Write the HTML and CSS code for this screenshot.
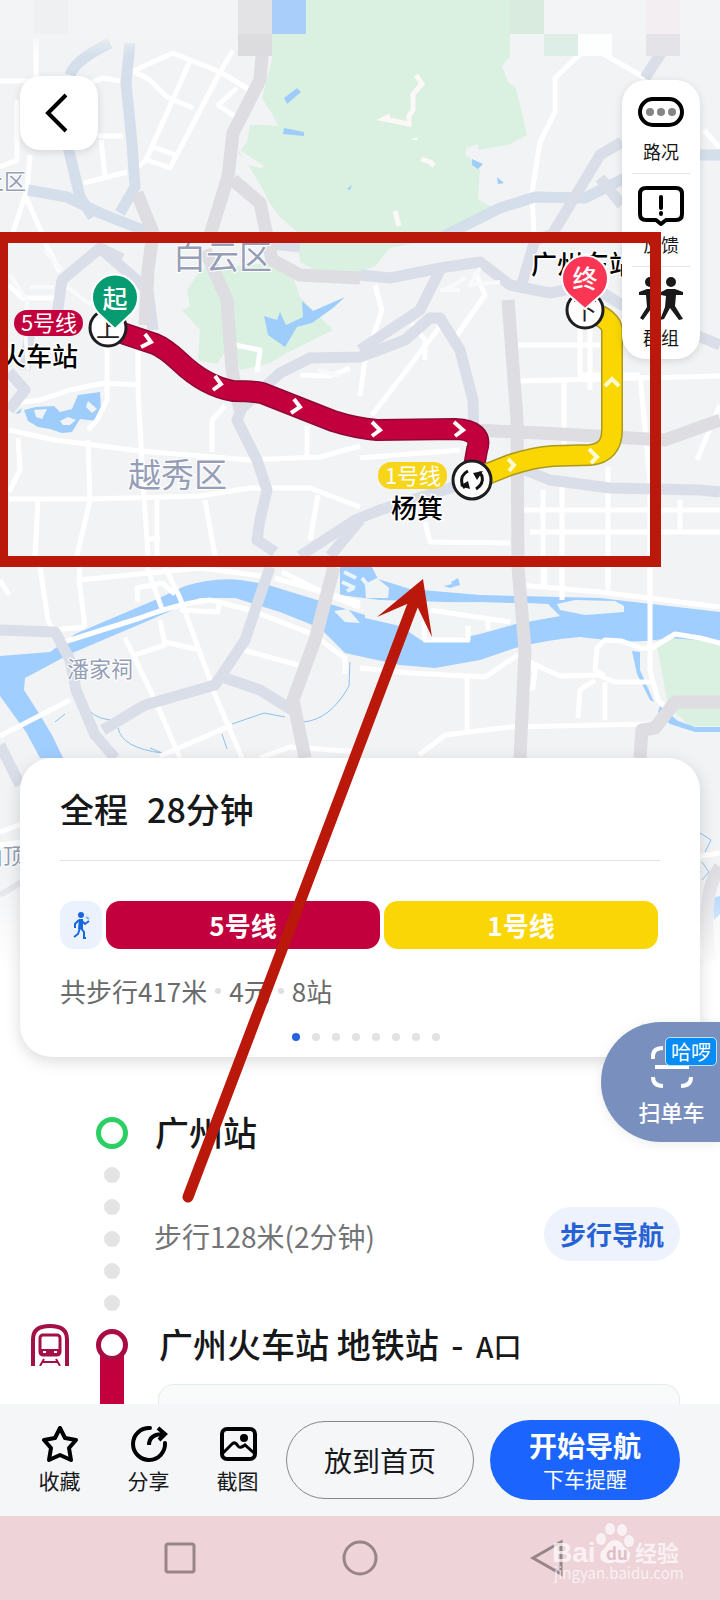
FILE: index.html
```html
<!DOCTYPE html>
<html lang="zh-CN">
<head>
<meta charset="utf-8">
<meta name="viewport" content="width=device-width, initial-scale=1">
<title>公交路线</title>
<link rel="stylesheet" href="styles.css">
</head>
<body>
<div class="screen">
  <svg class="map" viewBox="0 0 720 1000" role="img" aria-label="地图">
    <defs>
      <linearGradient id="fade" x1="0" y1="0" x2="0" y2="1"><stop offset="0" stop-color="#fff" stop-opacity="0"/><stop offset="1" stop-color="#fff"/></linearGradient>
      <linearGradient id="top" x1="0" y1="0" x2="0" y2="1"><stop offset="0.5" stop-color="#f3f4f6"/><stop offset="1" stop-color="#f3f4f6" stop-opacity="0"/></linearGradient>
    </defs>
    <rect width="720" height="1000" fill="#f2f3f5"/>
    <!-- parks -->
    <g fill="#daf1e1">
      <path d="M272 0H510V57L502 66L508 82L516 88L527 135L508 145L465 152L480 170L478 200L495 208L478 222L440 238L390 248L375 266L360 272L325 276L300 262L297 232L278 215L268 200L262 188L250 168L238 153L247 142L250 125L278 125L270 112L262 98L272 60Z"/>
      <path d="M197 275L187 290L190 307L182 310L200 330L198 360L217 364L233 340L240 370L270 363L287 353L333 330L300 297L290 267L267 263L233 267L207 265Z"/>
      <path d="M656 640L690 634L720 646V726H690L668 706Z"/>
    </g>
    <path d="M466 148L478 144L480 160L466 156Z M258 104L270 110L278 126L256 124Z M240 150L264 166L262 168L242 164Z" fill="#f2f3f4"/>
    <path d="M416 75L422 84L413 94V110L409 116V124L384 119L390 116M415 138V140M421 159L430 162L434 166M395 211L399 226" fill="none" stroke="#fbf8f7" stroke-width="5"/>
    <!-- lakes -->
    <g fill="#9fcdfb">
      <path d="M284 98L297 88L301 92L287 104ZM284 128L304 132V136L283 134ZM472 159L483 164L478 169L472 165ZM347 189L352 185L350 190ZM497 177L504 183L498 184Z"/>
      <path d="M264 316L277 320L280 312L286 325L303 317L302 301L313 311L345 297L333 308L312 323L297 327L285 347L268 335Z"/>
      <path d="M24 410L36 407L54 406L60 412L72 409L78 395L100 392L101 410L96 421L80 419L72 432L62 433L50 429L38 427L28 421ZM15 414L22 408L20 413Z"/>
    </g>
    <path d="M34 410L47 409L42 419L36 417M60 421L68 417L76 420L70 425L63 425M88 401L97 409L92 413L86 407M79 402L83 406" fill="#f2f3f6"/>
    <!-- river -->
    <g fill="#a0cefe">
      <path d="M0 656L50 652L75 634L155 600L185 586Q215 577 240 580L265 584L330 604L400 626L440 642Q475 637 515 624L560 616L548 604L525 603H480L380 600L340 595L340 567H372L378 579L410 589L480 595L600 598L720 612V642L670 638Q640 643 615 641L580 637Q545 640 515 648L480 660L435 668L400 665L345 653L320 628L280 612L235 598L200 598L150 620L70 654L25 678L24 690L40 715L52 735L63 758H40L26 732L0 696Z"/>
      <path d="M632 651L640 652V670L654 702L650 700L637 674ZM660 706L678 721L695 727H720V732H695L670 724L658 712Z"/>
      <path d="M712 898L720 896V914L714 920ZM700 958L704 960V972L700 974Z"/>
    </g>
    <path d="M557 604L575 600L615 601L624 606V612L585 615L560 610ZM334 611L348 609L360 623L345 622ZM365 584L377 578L389 588L388 598H366ZM365 604L480 602L540 604L558 616L515 624L480 632L440 642H424L400 626L365 618Z" fill="#f1f4f4"/>
    <path d="M344 572L356 578M342 582L355 588M347 591L354 588M362 578L370 588" stroke="#eaf5fb" stroke-width="4"/>
    <path d="M451 582L458 578L460 585L450 588L444 586L452 584Z" fill="#a0cefe"/>
    <path d="M84 704Q92 718 110 720M118 728Q122 748 162 753M232 724L264 713L285 717M303 722Q330 720 349 686L350 662M222 734L227 749M150 748L162 753M65 714L55 722M700 833L711 840L705 852M702 862L709 872L702 880" fill="none" stroke="#8cc1ee" stroke-width="1"/>
    <!-- local streets -->
    <g fill="none" stroke="#fff" stroke-width="5" stroke-linejoin="round">
      <path d="M0 81H36V38M17 100V160L0 167M92 82L103 78L120 81M98 136H123M101 140L105 175M84 183L127 172M30 155L27 190L12 235M25 195L45 240"/>
      <path d="M133 71L173 53L220 72L250 90M233 50L219 74L170 168L147 160L138 166M190 61L146 160M133 71L150 80L167 97L193 108M151 146L175 155M237 88L218 105L237 118"/>
      <path d="M534 235L532 192L540 142L555 112V78L580 54L602 53L645 78M704 130L720 148"/>
      <path d="M45 243L60 272M9 285L22 298H55M15 403L40 400L70 390L105 383L138 385M107 345V400L97 420L88 430M138 345V390L143 480L148 556M9 430L55 440L140 451L250 460L320 457L345 450L360 446M88 440L90 500L77 556M9 499H90L200 496L250 488L310 488L360 507M38 500L35 556M18 438L20 470L9 492M205 500L215 556M157 500V556M147 539H160M212 452V420L225 406M235 345L260 350L257 372M307 426V457M318 495L310 540M300 375L330 376L350 368"/>
      <path d="M375 285L382 310L372 340M412 324L425 340V360M445 320L372 415M475 272L485 295L455 338M360 396L365 360M518 345H600M520 381L720 376M564 381V455M580 320V375H640M590 325V390M640 375L650 480M520 510H720M530 532H720M543 490V585M562 476V600M608 467V585M650 460V600M680 500V530M360 458L460 450M425 522L430 542L510 543M610 486H645M697 460L720 405"/>
      <path d="M9 595L0 580M40 567L48 620L53 630L85 627M80 567L79 580L85 627M79 580L200 568L262 576M147 567L163 612M165 567L180 598L210 680M138 602L137 588L162 583L175 594M64 642L140 618Q180 603 210 600L250 610L312 634L345 658L345 674M125 638L155 700L180 758M160 620L165 645L135 655M165 642L200 650M180 610L218 612L220 600M213 690L242 758M243 650L298 665M160 756L232 725M260 758L290 747L360 752"/>
      <path d="M275 578L360 603M282 572L318 590L360 608M430 610L510 622M424 622L425 640H468V626M488 620V630M360 668L410 673L485 677L518 655M467 677V730M525 660L560 676L603 675L595 670L597 648L605 640L622 641L640 648H652L675 634L700 638L720 643M525 666L535 670L533 688L525 690M595 680L580 690L578 718M600 676L615 682H652M605 682V720M419 755L445 735L510 727L650 724M520 585L600 592L720 607M545 567V585M562 567V590M608 567V590M650 567V670L658 700L670 712L650 730M70 700L0 736"/>
      <path d="M0 832L22 824M0 845L22 842M680 860L720 853"/>
    </g>
    <!-- trunk roads -->
    <g fill="none" stroke="#dadee8" stroke-linejoin="round">
      <g stroke-width="11">
        <path stroke="#d5deeb" d="M130 43L126 83L132 143L135 187L120 213M110 43Q75 60 70 75M68 147L80 197L93 217M28 190L67 197L100 213L145 231"/>
        <path stroke="#d5deeb" d="M440 238L500 208L535 197L585 198L625 178M700 155H720"/>
        <path d="M550 238L600 155L622 142M600 178L622 205M645 78L663 50"/>
        <path d="M57 315L62 280L100 248L148 290L153 330M100 248L122 259M262 243L300 247M240 410L280 373L310 358L360 357L405 340L430 318L440 318L460 350L473 400L474 440M9 372L25 390L9 410M25 370L30 330M360 275L390 278L440 268L480 262L510 285L550 293L590 285L622 305L720 345"/>
        <path d="M520 290L535 240L550 235M440 270L420 310L360 350M242 408L237 420L257 460L267 490L260 520L257 540L275 552M300 556L355 520L380 510L460 485L520 468L550 480L610 488L700 490L720 492"/>
        <path d="M360 520L330 556M0 630L55 632L70 660L76 690L95 735L115 758M103 730L145 705L215 685L245 640L262 590L270 567M225 678L260 690L292 710M0 745L20 785" />
      </g>
      <path d="M263 43L260 80L233 133L228 177L210 235M233 180L260 203L272 260L300 275L360 278M137 193L153 233L148 270L145 325M205 250L227 300L232 370L240 410M508 300L517 420L518 567L525 650L520 758M474 430L560 434L665 440L720 420M720 702H675L655 728L642 730L640 758M334 567L315 640L293 700L305 758M720 867Q700 895 710 960" stroke="#dddde2" stroke-width="13"/>
      <path d="M0 895L22 882" stroke="#dfe1e5" stroke-width="6"/>
    </g>
    <path d="M67 287L91 305M30 287H54M45 250L62 270M10 275L27 300L25 330L28 370M445 290L465 278M460 290H440M480 268L470 285L500 282M318 370L340 376" fill="none" stroke="#f9fafc" stroke-width="4"/>
    <!-- blocks behind the status bar -->
    <rect width="272" height="56" fill="url(#top)"/><rect x="510" width="210" height="56" fill="url(#top)"/>
    <path fill="#eff0f2" d="M34 0h34v34H34z"/><path fill="#e3e3e5" d="M238 0h34v34h-34z"/><path fill="#dcdcde" d="M238 34h34v22h-34z"/><path fill="#a9cef9" d="M272 0h34v34h-34z"/><path fill="#d9eadf" d="M510 0h34v34h-34z"/><path fill="#dceee6" d="M544 34h34v22h-34z"/><path fill="#fdfefe" d="M578 34h34v22h-34z"/><path fill="#f2eef1" d="M646 0h34v34h-34z"/><path fill="#e4e3e7" d="M646 34h34v22h-34z"/>
    <rect y="870" width="720" height="100" fill="url(#fade)"/><rect y="970" width="720" height="30" fill="#fff"/>
    <!-- place names -->
    <g class="place">
      <text x="173" y="269" font-size="33">白云区</text>
      <text x="128" y="487" font-size="33">越秀区</text>
      <text x="67" y="677" font-size="22">潘家祠</text>
      <text x="-18" y="189" font-size="22">上区</text>
      <text x="-19" y="864" font-size="22">山顶</text>
    </g>
    <!-- metro lines -->
    <g fill="none" stroke-linecap="round" stroke-linejoin="round">
      <path d="M107 327L125 334L155 344Q165 348 180 362Q205 386 233 391Q252 391 262 393L295 406L333 421Q355 428 377 430L455 429Q484 430 477 450L472 478" stroke="#8d0836" stroke-width="22"/>
      <path d="M107 327L125 334L155 344Q165 348 180 362Q205 386 233 391Q252 391 262 393L295 406L333 421Q355 428 377 430L455 429Q484 430 477 450L472 478" stroke="#c2003d" stroke-width="19"/>
      <path d="M472 480L510 465Q535 457 553 456L590 455Q612 453 612 430V330Q611 318 588 311" stroke="#aa991d" stroke-width="22"/>
      <path d="M472 480L510 465Q535 457 553 456L590 455Q612 453 612 430V330Q611 318 588 311" stroke="#fad603" stroke-width="19"/>
    </g>
    <g fill="none" stroke="#fff" stroke-width="4">
      <path d="M145 334L151 342L141 347M215 376L221 384L213 390M294 399L300 407L291 413M372 422L380 430L372 436M454 422L463 430L455 436"/>
      <path d="M508 459L514 465L509 471M589 449L597 457L591 463M605 386L612 379L619 386" stroke="#fffbd0"/>
    </g>
    <g fill="#fff" stroke="#1e1e20" stroke-width="3"><circle cx="108" cy="328" r="18"/><circle cx="585" cy="310" r="18"/><circle cx="472" cy="480" r="19"/></g>
    <g class="stop" text-anchor="middle"><text x="108" y="337" font-size="24">上</text><text x="585" y="319" font-size="24">下</text></g>
    <path d="M468 471Q460 475 462 484L465 488M476 489Q484 484 482 476L479 472" fill="none" stroke="#111" stroke-width="3"/><path d="M460 486L470 489L468 481ZM473 473L483 471L477 480Z" fill="#111"/>
    <rect x="14" y="310" width="69" height="26" rx="13" fill="#c2003d"/><rect x="378" y="462" width="69" height="27" rx="13" fill="#f7d51b"/>
    <g class="line-name" text-anchor="middle"><text x="49" y="331">5号线</text><text x="413" y="484">1号线</text></g>
    <g class="station"><text x="0" y="366">火车站</text><text x="391" y="518">杨箕</text><text x="531" y="274">广州东站</text></g>
    <path d="M115 329L98 313A23 23 0 1 1 132 313Z" fill="#079b72" stroke="#fff" stroke-width="2"/>
    <path d="M585 309L568 294A23 23 0 1 1 602 294Z" fill="#fa3654" stroke="#fff" stroke-width="2"/>
    <g class="pin" text-anchor="middle"><text x="115" y="308">起</text><text x="585" y="288">终</text></g>
  </svg>

  <header class="controls">
    <button class="back" aria-label="返回"><svg width="24" height="40" viewBox="0 0 24 40"><path d="M21 2L3 20L21 38" fill="none" stroke="#000" stroke-width="4"/></svg></button>
    <div class="tools">
      <button class="tool"><svg width="46" height="40" viewBox="0 0 46 40"><rect x="2" y="7" width="42" height="26" rx="13" fill="none" stroke="#000" stroke-width="4"/><g fill="#858585"><circle cx="12" cy="20" r="4"/><circle cx="23" cy="20" r="4"/><circle cx="34" cy="20" r="4"/></g></svg><span>路况</span></button>
      <button class="tool"><svg width="46" height="40" viewBox="0 0 46 40"><path d="M8 2H38Q44 2 44 8V28Q44 34 38 34H28L23 38L18 34H8Q2 34 2 28V8Q2 2 8 2Z" fill="none" stroke="#000" stroke-width="4" stroke-linejoin="round"/><path d="M23 11V22M23 27V28" stroke="#000" stroke-width="4" stroke-linecap="round"/></svg><span>反馈</span></button>
      <button class="tool"><svg width="46" height="46" viewBox="0 0 46 46" fill="#19191c"><circle cx="12" cy="6" r="5"/><circle cx="33" cy="6" r="5"/><path d="M1 16L9 13H16L23 16L29 13H37L45 16V19L38 19L37 30L45 43L41 44L32 32L26 43L22 44L27 31L28 20L23 19L18 20V31L23 43L19 44L13 33L5 44L2 42L9 31L8 19L1 19Z"/></svg><span>群组</span></button>
    </div>
  </header>

  <main>
    <section class="card">
      <h1><span>全程</span><span>28分钟</span></h1>
      <div class="legs">
        <span class="leg-walk"><svg width="20" height="28" viewBox="0 0 20 28"><circle cx="10" cy="4" r="3" fill="#1768e0"/><path d="M8 8H12V18H7Z" fill="#1768e0"/><path d="M8 9L4 13V17M11 10L14 13L18 10M9 17L7 23L3 26M10 17L13 21V27H15" stroke="#1768e0" stroke-width="2" fill="none"/><path d="M15 6L18 8" stroke="#7fb0ef" stroke-width="2"/></svg></span>
        <span class="leg leg-red">5号线</span><span class="leg leg-yellow">1号线</span>
      </div>
      <p class="summary"><span>共步行417米</span><i></i><span>4元</span><i></i><span>8站</span></p>
      <div class="pager"><i class="on"></i><i></i><i></i><i></i><i></i><i></i><i></i><i></i></div>
    </section>

    <section class="steps">
      <div class="step"><i class="node node-start"></i><h2>广州站</h2></div>
      <div class="walk"><div class="dots"><i></i><i></i><i></i><i></i><i></i></div><p>步行128米(2分钟)</p><button class="walk-nav">步行导航</button></div>
      <div class="step metro">
        <svg class="train" width="38" height="42" viewBox="0 0 38 42" fill="none" stroke="#a31045"><path d="M2 42V15Q2 2 19 2T36 15V42" stroke-width="4"/><rect x="9" y="11" width="20" height="20" rx="3" stroke-width="3"/><path d="M9 25H29V31H9Z" fill="#a31045" stroke="none"/><path d="M12 28H15M23 28H26" stroke="#fff" stroke-width="2"/><path d="M13 35L9 42M25 35L29 42M12 38H26" stroke-width="2"/></svg>
        <i class="node node-metro"></i><h2>广州火车站 地铁站 <span class="dash">-</span> <small>A口</small></h2>
      </div>
      <div class="ride"><span class="rail"></span><div class="ride-card"></div></div>
    </section>
  </main>

  <footer class="bar">
    <button class="action"><svg width="38" height="36" viewBox="0 0 38 36"><path d="M19 2L24 12L35 14L28 22L30 34L19 29L8 34L10 22L3 14L14 12Z" fill="none" stroke="#000" stroke-width="4" stroke-linejoin="round"/></svg><span>收藏</span></button>
    <button class="action"><svg width="38" height="36" viewBox="0 0 38 36" fill="none" stroke="#000" stroke-width="4"><path d="M20 2A16 16 0 1 0 35 17" stroke-linecap="round"/><path d="M19 19Q19 8 34 8M28 2L35 8L29 14"/></svg><span>分享</span></button>
    <button class="action"><svg width="38" height="36" viewBox="0 0 38 36"><rect x="3" y="3" width="33" height="30" rx="5" fill="none" stroke="#000" stroke-width="4"/><circle cx="25" cy="12" r="4"/><path d="M4 27L13 18Q16 15 19 20Q21 23 26 19L35 27" fill="none" stroke="#000" stroke-width="3"/></svg><span>截图</span></button>
    <button class="home">放到首页</button>
    <button class="go"><b>开始导航</b><span>下车提醒</span></button>
  </footer>
  <nav class="system">
    <button aria-label="最近任务"><svg width="40" height="40" viewBox="0 0 40 40"><rect x="6" y="6" width="28" height="28" rx="2"/></svg></button>
    <button aria-label="主页"><svg width="40" height="40" viewBox="0 0 40 40"><circle cx="20" cy="20" r="16"/></svg></button>
    <button aria-label="返回上一级"><svg width="40" height="40" viewBox="0 0 40 40"><path d="M41 4V36L13 20Z"/></svg></button>
  </nav>

  <button class="scan">
    <svg width="42" height="42" viewBox="0 0 42 42" fill="none" stroke="#fff" stroke-width="4"><path d="M2 13V10Q2 2 12 2M30 2Q40 2 40 10V13M2 31Q2 40 12 40M40 31Q40 40 30 40M4 21H38"/></svg>
    <span class="hello">哈啰</span><span>扫单车</span>
  </button>

  <svg class="marks" viewBox="0 0 720 1600" aria-hidden="true">
    <g fill="#bb180c"><path fill-rule="evenodd" d="M0 232H661V567H0ZM8 243V556H650V243Z"/><path d="M423 579L432 637L418 608L407 604L377 617Z"/></g>
    <path d="M188 1197L412 607" stroke="#bb180c" stroke-width="11" stroke-linecap="round"/>
    <g class="watermark" fill="#fff">
      <text class="bai" x="552" y="1562" font-size="28">Bai</text><text x="635" y="1561" font-size="22" font-weight="700">经验</text><text x="554" y="1579" font-size="15">jingyan.baidu.com</text>
      <ellipse cx="601" cy="1539" rx="5" ry="6"/><ellipse cx="610" cy="1529" rx="5" ry="6"/><ellipse cx="622" cy="1530" rx="5" ry="6"/><ellipse cx="629" cy="1541" rx="5" ry="6"/><path d="M615 1540Q621 1540 624 1547Q633 1552 629 1560Q624 1565 615 1562Q606 1565 601 1560Q598 1552 606 1547Q609 1540 615 1540Z"/><text class="du" x="606" y="1560" font-size="17" font-weight="700">du</text>
    </g>
  </svg>
</div>
</body>
</html>
```
FILE: styles.css
```css
* { box-sizing: border-box; }
body { margin: 0; background: #fff; color: #17181a; font-family: "Noto Sans CJK SC", "Noto Sans", sans-serif; }
button { border: 0; padding: 0; background: none; color: inherit; font: inherit; }
h1, h2, p { margin: 0; }
i { display: block; }
svg { display: block; flex: none; }
.screen { position: relative; min-height: 100vh; display: flex; flex-direction: column; overflow: hidden; }

.map { position: absolute; top: 0; left: 0; width: 100%; height: auto; }
.place { fill: #959eb6; stroke: #fff; stroke-width: 2; paint-order: stroke; }
.line-name { fill: #fff; font-size: 22px; }
.station { font-size: 26px; font-weight: 500; fill: #000; stroke: #fff; stroke-width: 3; paint-order: stroke; }
.pin { fill: #fff; font-size: 25px; font-weight: 500; }
.stop { fill: #222; }

.controls { position: relative; min-height: 758px; padding: 76px 20px 0; display: flex; justify-content: space-between; align-items: flex-start; }
.back { width: 78px; height: 74px; padding-right: 4px; border-radius: 20px; background: #fff; box-shadow: 0 2px 8px #0000001f; display: flex; align-items: center; justify-content: center; }
.tools { width: 78px; margin-top: 4px; padding: 0 10px; border-radius: 24px; background: #fff; box-shadow: 0 2px 8px #0000001f; }
.tool { width: 100%; height: 93px; padding: 12px 0 9px; display: flex; flex-direction: column; align-items: center; justify-content: space-between; font-size: 18px; line-height: 26px; }
.tool + .tool { border-top: 1px solid #e3e4e6; }
.tool:last-child { padding-top: 9px; }

main { position: relative; flex: 1; }
.card { margin: 0 20px; padding: 27px 40px 16px; border-radius: 32px; background: #fff; box-shadow: 0 4px 16px #00000026; }
.card h1 { display: flex; gap: 19px; padding-bottom: 27px; border-bottom: 1px solid #e1e2e4; font-size: 34px; line-height: 48px; font-weight: 500; }
.legs { display: flex; gap: 4px; height: 48px; margin-top: 40px; padding-right: 2px; }
.leg-walk { width: 42px; border-radius: 14px; background: #ebf2fe; display: flex; align-items: center; justify-content: center; }
.leg { flex: 1; border-radius: 14px; color: #fff; font-size: 26px; line-height: 48px; font-weight: 700; text-align: center; }
.leg-red { background: #c2003d; }
.leg-yellow { background: #fad607; }
.summary { display: flex; align-items: center; gap: 8px; margin-top: 22px; color: #6a6b6d; font-size: 26px; line-height: 40px; }
.summary i { width: 6px; height: 6px; border-radius: 50%; background: #dedfe1; }
.pager { display: flex; justify-content: center; gap: 12px; margin-top: 22px; padding-left: 12px; }
.pager i { width: 8px; height: 8px; border-radius: 50%; background: #e1e2e4; }
.pager .on { background: #2762dc; }

.steps { padding-right: 40px; }
.step { display: flex; align-items: center; height: 56px; }
.steps > .step:first-child { margin-top: 48px; }
.node { flex: none; width: 32px; height: 32px; border-radius: 50%; background: #fff; }
.node-start { border: 5px solid #2ccf64; margin: 0 27px 0 96px; }
.node-metro { position: relative; z-index: 1; border: 5px solid #a90c42; margin: 0 31px 0 27px; }
.train { margin-left: 31px; }
.step h2 { padding-bottom: 2px; font-size: 34px; line-height: 48px; font-weight: 500; white-space: nowrap; }
.metro h2 { padding: 0; }
.step small { font-size: 28px; font-weight: 500; }
.dash { padding: 0 5px; }
.walk { display: flex; align-items: center; height: 156px; padding-left: 104px; }
.dots { display: flex; flex-direction: column; gap: 16px; }
.dots i { width: 16px; height: 16px; border-radius: 50%; background: #e4e4e4; }
.walk p { flex: 1; margin: 0 0 7px 34px; color: #737476; font-size: 28px; line-height: 40px; }
.walk-nav { height: 54px; margin-bottom: 10px; padding: 0 16px; border-radius: 27px; background: #edf2fd; color: #2762d4; font-size: 26px; font-weight: 700; line-height: 50px; }
.ride { display: flex; height: 31px; padding-left: 100px; align-items: flex-end; }
.rail { width: 24px; height: 54px; background: #c2003d; }
.ride-card { flex: 1; height: 20px; margin-left: 34px; border: 1px solid #e2ecea; border-bottom: 0; border-radius: 16px 16px 0 0; background: #f9fbfb; }

.bar { position: relative; display: flex; align-items: center; height: 112px; padding: 0 40px 0 15px; background: #f5f6f8; }
.action { width: 89px; height: 80px; display: flex; flex-direction: column; align-items: center; gap: 2px; font-size: 21px; line-height: 32px; padding-top: 6px; }
.home { flex: 1; height: 78px; margin: 0 16px 0 4px; border: 1px solid #85878a; border-radius: 39px; font-size: 28px; }
.go { width: 190px; height: 80px; border-radius: 40px; background: #1b64fd; color: #fff; display: flex; flex-direction: column; align-items: center; justify-content: center; font-size: 21px; line-height: 30px; }
.go b { font-size: 28px; line-height: 36px; font-weight: 700; }
.system { position: relative; height: 84px; padding: 0 90px; display: flex; align-items: center; justify-content: space-around; background: #eed3d8; }
.system svg { overflow: visible; fill: none; stroke: #978589; stroke-width: 3; }

.scan { position: absolute; top: 1022px; right: 0; width: 119px; height: 120px; padding: 24px 0 0 22px; border-radius: 60px 0 0 60px; background: #7990bf; color: #fff; box-shadow: 0 2px 12px #00000014; display: flex; flex-direction: column; align-items: center; gap: 7px; font-size: 22px; line-height: 32px; font-weight: 500; }
.hello { position: absolute; top: 15px; right: 3px; padding: 0 5px; border: 1px solid #bfe3ff; border-radius: 5px; background: #078bf5; font-size: 20px; line-height: 27px; font-weight: 400; }
.marks { position: absolute; top: 0; left: 0; width: 100%; height: auto; pointer-events: none; }
.watermark { opacity: 0.7; font-family: "Noto Sans CJK SC", "Noto Sans", sans-serif; }
.bai { font-family: "Liberation Sans", sans-serif; font-weight: 700; }
.du { fill: #d9b5bd; }
```
